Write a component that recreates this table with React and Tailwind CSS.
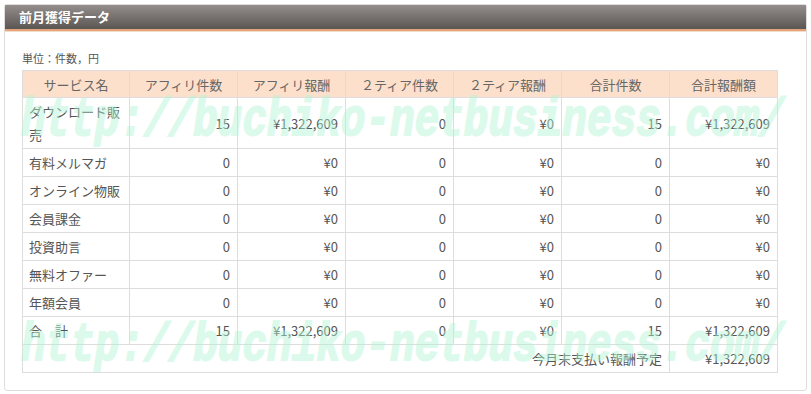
const headers = ["サービス名", "アフィリ件数", "アフィリ報酬", "２ティア件数", "２ティア報酬", "合計件数", "合計報酬額"];

const rows = [
  ["ダウンロード販売", "15", "¥1,322,609", "0", "¥0", "15", "¥1,322,609"],
  ["有料メルマガ", "0", "¥0", "0", "¥0", "0", "¥0"],
  ["オンライン物販", "0", "¥0", "0", "¥0", "0", "¥0"],
  ["会員課金", "0", "¥0", "0", "¥0", "0", "¥0"],
  ["投資助言", "0", "¥0", "0", "¥0", "0", "¥0"],
  ["無料オファー", "0", "¥0", "0", "¥0", "0", "¥0"],
  ["年額会員", "0", "¥0", "0", "¥0", "0", "¥0"],
  ["合　計", "15", "¥1,322,609", "0", "¥0", "15", "¥1,322,609"],
];

const Watermark = ({ top }) => (
  <div
    className={`pointer-events-none absolute left-[21px] ${top} origin-top scale-y-[1.3] whitespace-nowrap text-[41px] font-bold italic leading-none text-[#b2f5d4] opacity-45 [-webkit-text-stroke:1.5px_#b2f5d4]`}
    style={{ fontFamily: '"Liberation Mono", monospace' }}
  >
    http://buchiko-netbusiness.com/
  </div>
);

const App = () => {
  return (
    <div
      className="relative h-[394px] w-[811px] overflow-hidden bg-white pt-[4px] pl-[4px]"
      style={{ fontFamily: '"Noto Sans CJK JP", "Noto Sans", sans-serif' }}
    >
      <div className="h-[387px] w-[803px] rounded-[3px] border border-[#dddddd]">
        {/* Header */}
        <div className="h-[24px] bg-gradient-to-b from-[#948f8d] to-[#5b5553] pl-[14px] text-[13px] font-bold leading-[24px] text-white">
          前月獲得データ
        </div>
        <div className="h-[2px] bg-[#e3a47a]" />
        <div className="border-t border-[#f4dccb]" />

        <div className="px-[17px] pt-[18px]">
          <p className="mb-[4px] text-[11px] leading-[16px] text-[#555]">単位：件数，円</p>
          <table className="w-[755px] table-fixed border-collapse text-[13px] text-[#555]">
            <colgroup>
              <col className="w-[107px]" />
              <col className="w-[108px]" />
              <col className="w-[108px]" />
              <col className="w-[108px]" />
              <col className="w-[108px]" />
              <col className="w-[108px]" />
              <col className="w-[108px]" />
            </colgroup>
            <thead>
              <tr className="bg-[#fde0cb]">
                {headers.map((h) => (
                  <th key={h} className="h-[27px] border border-[#dddddd] p-0 text-center font-normal leading-[23px] text-[#666]">
                    {h}
                  </th>
                ))}
              </tr>
            </thead>
            <tbody>
              {rows.map((row, i) => (
                <tr key={i}>
                  {row.map((cell, j) => (
                    <td
                      key={j}
                      className={`border border-[#dddddd] py-[2px] leading-[23px] ${
                        j === 0 ? "pl-[6px] pr-[4px] text-left" : "pr-[7px] text-right"
                      }`}
                    >
                      {cell}
                    </td>
                  ))}
                </tr>
              ))}
              <tr>
                <td colSpan={6} className="border border-[#dddddd] py-[2px] pr-[7px] text-right leading-[23px]">
                  今月末支払い報酬予定
                </td>
                <td className="border border-[#dddddd] py-[2px] pr-[7px] text-right leading-[23px]">¥1,322,609</td>
              </tr>
            </tbody>
          </table>
        </div>
      </div>

      <Watermark top="top-[95px]" />
      <Watermark top="top-[320px]" />
    </div>
  );
};

export default App;
